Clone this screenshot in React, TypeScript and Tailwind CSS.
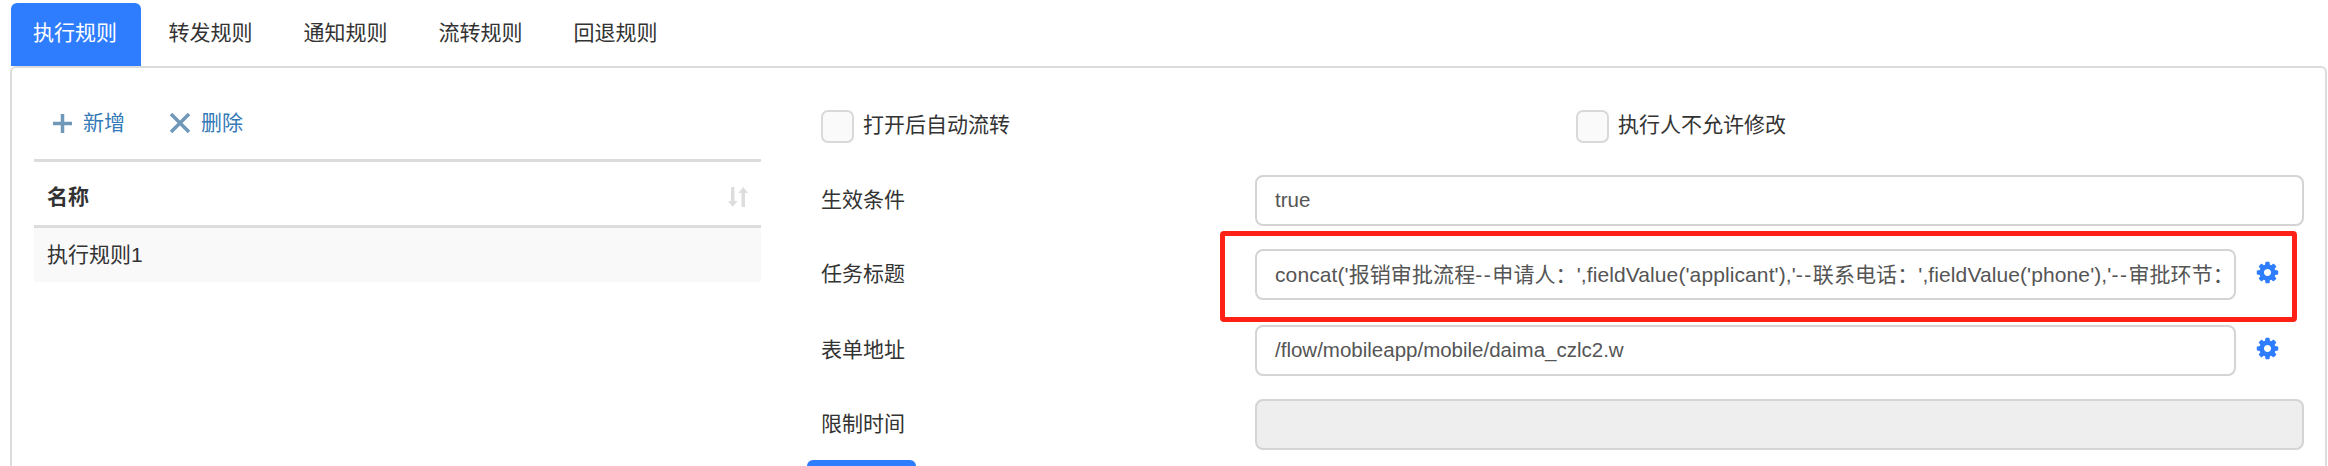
import React from "react";

const fontCls = "font-['Liberation_Sans','Noto_Sans_CJK_SC',sans-serif]";
const inputCls = "h-[51px] flex items-center rounded-[8px] border-2 border-[#d4d4d4] px-[18px] text-[20.5px] text-[#555] whitespace-pre overflow-hidden";

const tabs = ["执行规则", "转发规则", "通知规则", "流转规则", "回退规则"];

const Checkbox: React.FC<{ label: string; className?: string }> = ({ label, className }) => (
    <div className={`flex items-center gap-[9px] ${className ?? ""}`}>
        <span className="w-[33px] h-[33px] rounded-[7px] border-2 border-[#d9d9d9] bg-[#fafafa]" />
        <span className="text-[21px] leading-[30px] -mt-[4px] text-[#333]">{label}</span>
    </div>
);

const Row: React.FC<{ label: string; className?: string; children: React.ReactNode }> = ({ label, className, children }) => (
    <div className={`flex items-center ${className ?? ""}`}>
        <label className="w-[434px] pb-[2px] text-[21px] text-[#333]">{label}</label>
        {children}
    </div>
);

const Gear: React.FC = () => (
    <svg viewBox="0 0 1792 1792" className="ml-[19px] -mt-[4px] w-[25px] h-[25px] text-[#2f7dff]" fill="currentColor">
        <path d="M1152 896q0-106-75-181t-181-75-181 75-75 181 75 181 181 75 181-75 75-181zm512-109v222q0 12-8 23t-20 13l-185 28q-19 54-39 91 35 50 107 138 10 12 10 25t-9 23q-27 37-99 108t-94 71q-12 0-26-9l-138-108q-44 23-91 38-16 136-29 186-7 28-36 28h-222q-14 0-24.500-8.500t-11.500-21.500l-28-184q-49-16-90-37l-141 107q-10 9-25 9-14 0-25-11-126-114-165-168-7-10-7-23 0-12 8-23 15-21 51-66.500t54-70.500q-27-50-41-99l-183-27q-13-2-21-12.500t-8-23.500v-222q0-12 8-23t19-13l186-28q14-46 39-92-40-57-107-138-10-12-10-24 0-10 9-23 26-36 98.500-107.500t94.500-71.500q13 0 26 10l138 107q44-23 91-38 16-136 29-186 7-28 36-28h222q14 0 24.500 8.500t11.500 21.500l28 184q49 16 90 37l142-107q9-9 24-9 13 0 25 10 129 119 165 170 7 8 7 22 0 12-8 23-15 21-51 66.500t-54 70.500q26 50 41 98l183 28q13 2 21 12.500t8 23.500z" />
    </svg>
);

const Dash: React.FC = () => <span className="tracking-[1.5px]">--</span>;

export default function App() {
    return (
        <div className={`w-[2328px] h-[466px] overflow-hidden bg-white ${fontCls}`}>
            <div className="flex h-[66px] pt-[3px] pl-[11px]">
                {tabs.map((t, i) => (
                    <div
                        key={t}
                        className={`flex items-center justify-center pb-[3px] text-[21px] rounded-t-[6px] ${
                            i === 0 ? "w-[130px] pr-[2px] bg-[#2f7dff] text-white" : "w-[135px] pl-[4px] text-[#333]"
                        }`}
                    >
                        {t}
                    </div>
                ))}
            </div>

            <div className="relative ml-[10px] mr-[1px] h-[400px] flex border-2 border-b-0 border-[#dcdcdc] rounded-tl-[6px] rounded-tr-[6px]">
                <div className="w-[750px] pl-[22px]">
                    <div className="flex items-center h-[91px] pt-[19px] pl-[19px] text-[21px] text-[#337ab7]">
                        <svg viewBox="0 0 19 19" className="w-[19px] h-[19px] text-[#6f98b9]" fill="none" stroke="currentColor" strokeWidth="3.500">
                            <path d="M9.500 0v19M0 9.500h19" />
                        </svg>
                        <span className="ml-[11px]">新增</span>
                        <svg viewBox="0 0 20 20" className="ml-[45px] w-[20px] h-[20px] text-[#6f98b9]" fill="none" stroke="currentColor" strokeWidth="3.500">
                            <path d="M1 1l18 18M19 1L1 19" />
                        </svg>
                        <span className="ml-[11px]">删除</span>
                    </div>
                    <div className="w-[727px]">
                        <div className="flex items-center justify-between h-[69px] pt-[7px] border-t-[3px] border-b-[3px] border-[#dcdcdc] pl-[13px] pr-[13px]">
                            <span className="text-[21px] font-bold text-[#333]">名称</span>
                            <svg viewBox="0 0 20 22" className="w-[20px] h-[22px] text-[#dddddd]" fill="currentColor">
                                <path d="M3 1h3.500v14H9.500L4.750 21 0 15h3zM13.500 21V7H10.500L15.250 1 20 7h-3v14z" />
                            </svg>
                        </div>
                        <div className="flex items-center h-[54px] pl-[13px] bg-[#f9f9f9] text-[21px] text-[#333]">执行规则1</div>
                    </div>
                </div>

                <div className="flex-1 pl-[59px] pt-[42px]">
                    <div className="flex items-center h-[33px] mb-[32px]">
                        <Checkbox label="打开后自动流转" className="w-[755px]" />
                        <Checkbox label="执行人不允许修改" />
                    </div>
                    <Row label="生效条件" className="mb-[23px]">
                        <div className={`${inputCls} w-[1049px]`}>true</div>
                    </Row>
                    <Row label="任务标题" className="mb-[25px]">
                        <div className={`${inputCls} w-[981px]`}>
                            <span className="text-[21px] tracking-[0.1px]">
                                concat('报销审批流程<Dash />申请人：',fieldValue('applicant'),'<Dash />联系电话：',fieldValue('phone'),'<Dash />审批环节：
                            </span>
                        </div>
                        <Gear />
                    </Row>
                    <Row label="表单地址" className="mb-[23px]">
                        <div className={`${inputCls} w-[981px]`}>/flow/mobileapp/mobile/daima_czlc2.w</div>
                        <Gear />
                    </Row>
                    <Row label="限制时间" className="mb-[10px]">
                        <div className={`${inputCls} w-[1049px] bg-[#eeeeee]`} />
                    </Row>
                    <div className="-ml-[14px] w-[109px] h-[40px] rounded-t-[6px] bg-[#2f7dff]" />
                </div>

                <div className="absolute left-[1208px] top-[163px] w-[1077px] h-[91px] border-[5px] border-[#ff2016] rounded-[4px]" />
            </div>
        </div>
    );
}
